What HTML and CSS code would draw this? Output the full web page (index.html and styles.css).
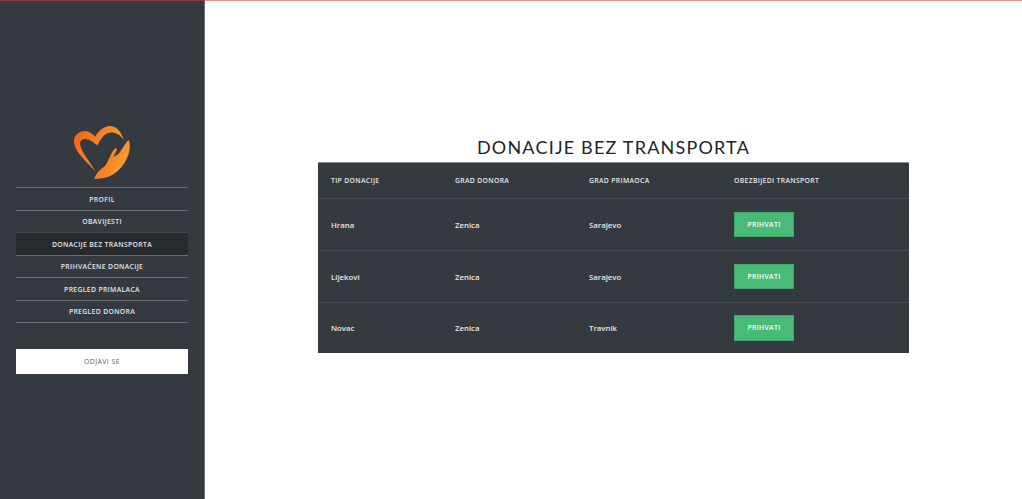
FILE: index.html
```html
<!DOCTYPE html>
<html lang="bs">
<head>
<meta charset="utf-8">
<title>Donacije bez transporta</title>
<link rel="stylesheet" href="styles.css">
</head>
<body>
<div class="topline"></div>
<div class="layout">
  <aside class="sidebar">
    <svg class="logo" viewBox="0 7 80 59" width="80" height="59" aria-hidden="true">
      <defs>
        <linearGradient id="g" x1="0" y1="0.2" x2="1" y2="0.7">
          <stop offset="0" stop-color="#f1651d"/>
          <stop offset="1" stop-color="#fca82e"/>
        </linearGradient>
      </defs>
      <path fill="url(#g)" d="M35.5 53.5 C28 45 15.5 35 14 25 C13 17.5 19 13 25 13 C29 13 32.5 15.5 35 19 C38 13 44 8 50 8 C56 8 61 13 63.5 21.5 C60 16.5 55 14 50.5 14.5 C44.5 15 40.5 21 37.5 27.5 C33.5 24 28.5 20.5 24.5 21 C20.5 21.5 19.5 24.5 20.5 28 C22.5 36 31 45 35.5 53.5 Z"/>
      <path fill="url(#g)" d="M34 61 C36 56 39 52 43 49.5 C47 47 48 42 50 38.5 C51.5 35 53 32 55 30.5 C57 29.5 57.5 31 56.5 33 L53.5 38.5 C57 38 60 34.5 62 31 C64 28 66 24.5 68.5 22 C70 24 70 28 69.5 32 C68 41 62 51 53 56.5 C47 60 40 61 34 61 Z"/>
    </svg>
    <nav class="menu">
      <a class="item">PROFIL</a>
      <a class="item">OBAVIJESTI</a>
      <a class="item active">DONACIJE BEZ TRANSPORTA</a>
      <a class="item">PRIHVAĆENE DONACIJE</a>
      <a class="item">PREGLED PRIMALACA</a>
      <a class="item">PREGLED DONORA</a>
    </nav>
    <a class="logout">ODJAVI SE</a>
  </aside>
  <main class="main">
    <h1 class="title">DONACIJE BEZ TRANSPORTA</h1>
    <table class="table">
      <thead>
        <tr><th>TIP DONACIJE</th><th>GRAD DONORA</th><th>GRAD PRIMAOCA</th><th>OBEZBIJEDI TRANSPORT</th></tr>
      </thead>
      <tbody>
        <tr><td>Hrana</td><td>Zenica</td><td>Sarajevo</td><td><button class="btn">PRIHVATI</button></td></tr>
        <tr><td>Lijekovi</td><td>Zenica</td><td>Sarajevo</td><td><button class="btn">PRIHVATI</button></td></tr>
        <tr><td>Novac</td><td>Zenica</td><td>Travnik</td><td><button class="btn">PRIHVATI</button></td></tr>
      </tbody>
    </table>
  </main>
</div>
</body>
</html>
```
FILE: styles.css
```css
* { box-sizing: border-box; }
html, body { margin: 0; height: 100%; overflow: hidden; background: #fff; }
body { font-family: "Open Sans", "Noto Sans", sans-serif; position: relative; }
.topline { position: absolute; top: 0; left: 0; right: 0; height: 1px; background: rgba(200, 60, 60, .55); z-index: 2; }
.layout { display: flex; height: 499px; }
.sidebar {
  width: 205px; flex: none; background: #343a40; border-right: 1px solid #6c6f72;
  padding: 0 16px; display: flex; flex-direction: column; justify-content: center; align-items: stretch;
}
.logo { align-self: center; display: block; margin: 0 4px 3px 0; }
.menu { display: flex; flex-direction: column; border-top: 1px solid #6b6e71; width: 172px; }
.item {
  height: 22.5px; padding-top: 1px; display: flex; align-items: center; justify-content: center;
  font-size: 6.8px; font-weight: 600; letter-spacing: .35px; color: #e6e6e6;
  border-bottom: 1px solid #6b6e71;
}
.item.active { background: #272b30; border-top: 1px solid #44484d; margin-top: -1px; height: 23.5px; }
.logout {
  margin-top: 26px; width: 172px; height: 25px; background: #fff; color: #5a5e63;
  display: flex; align-items: center; justify-content: center;
  font-size: 6.8px; font-weight: 500; letter-spacing: .5px;
}
.main { flex: 1; padding: 137px 0 0 113px; }
.title {
  width: 591px; margin: 0; height: 25px; line-height: 21px; text-align: center;
  font-family: Lato, "Open Sans", sans-serif;
  font-size: 18px; font-weight: 400; letter-spacing: 1.2px; color: #212529;
}
.table { width: 591px; border-collapse: collapse; background: #343a40; color: #e8e8e8; table-layout: fixed; }
.table th, .table td { padding: 0 0 0 13px; text-align: left; }
.table th:nth-child(1) { width: 124px; }
.table th:nth-child(2) { width: 134px; }
.table th:nth-child(3) { width: 145px; }
.table th { height: 36px; font-size: 6.8px; font-weight: 600; letter-spacing: .35px; border-top: 1px solid #8a8d90; }
.table td { height: 52px; font-size: 7.8px; font-weight: 600; border-top: 1px solid #454e55; }
.table tr:last-child td { height: 50px; }
.btn {
  width: 60px; height: 25.5px; display: block; padding: 0; border: 1px solid #41a868; background: #48bb78; color: #fff;
  font: 600 6.8px "Open Sans", sans-serif; letter-spacing: .35px;
}
```
